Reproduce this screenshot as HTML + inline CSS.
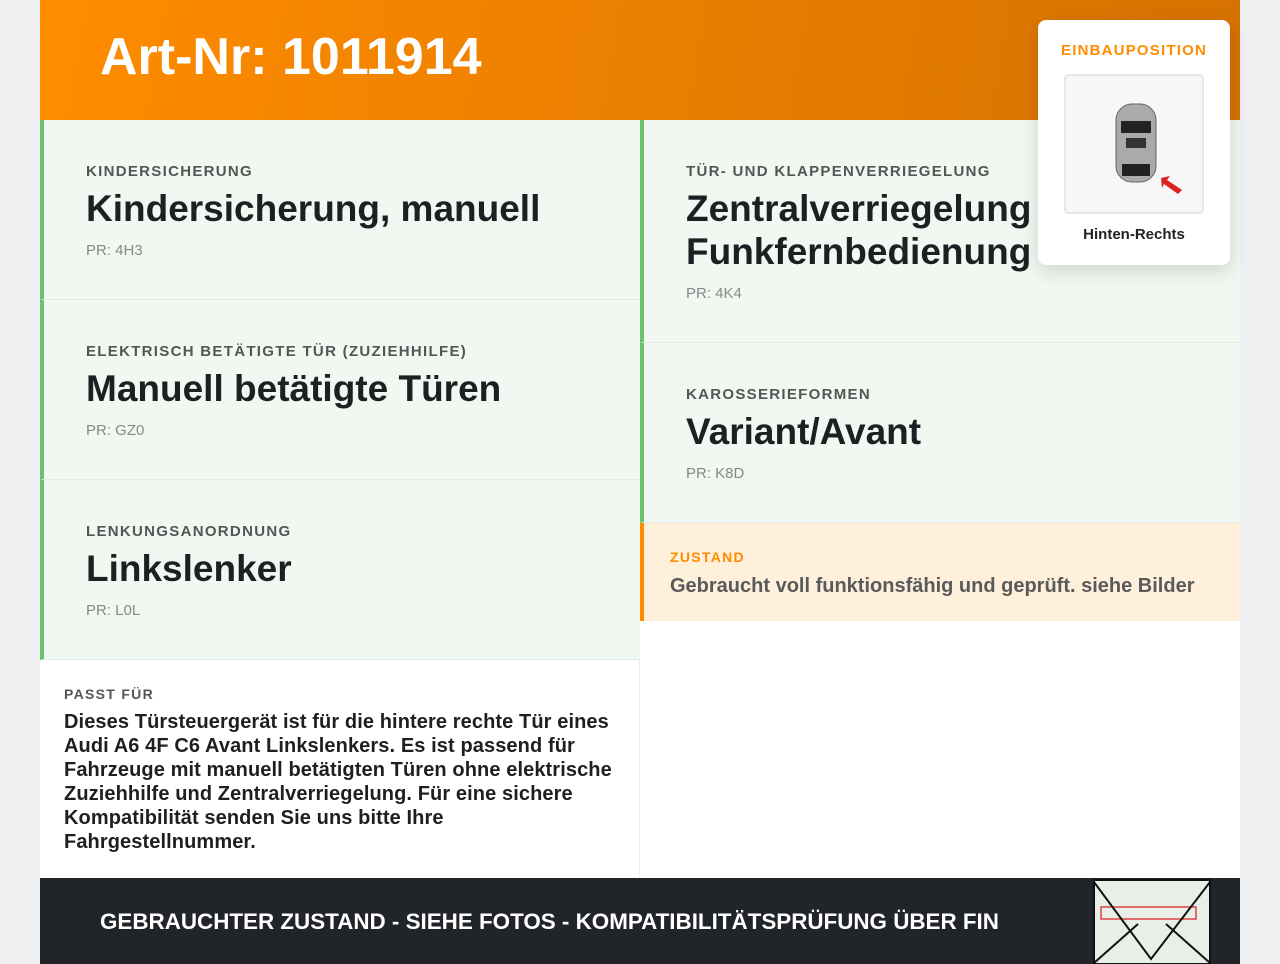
<!DOCTYPE html>
<html><head><meta charset="utf-8"><style>
*{margin:0;padding:0;box-sizing:border-box}
body{width:1280px;height:964px;background:#eef0f2;font-family:"Liberation Sans",sans-serif;overflow:hidden;position:relative}
.wrap{position:absolute;left:40px;top:0;width:1200px;height:964px;background:#fff}
.hdr{position:absolute;left:0;top:0;width:1200px;height:120px;background:linear-gradient(100deg,#ff8c00,#d67200)}
.hdr h1{position:absolute;left:60px;top:27px;color:#fff;font-size:52px;font-weight:bold}
.cell{position:absolute;background:#f1f8f1;border-left:4px solid #6cc070;border-bottom:1px solid #e3ece3;padding-left:42px}
.lab{font-size:15px;letter-spacing:1.3px;color:#555;font-weight:bold;text-transform:uppercase}
.tit{font-size:37px;font-weight:bold;color:#1d1f22;line-height:43px;margin-top:7px}
.pr{font-size:15px;color:#888;margin-top:12px}
.zu{position:absolute;left:600px;top:523px;width:600px;height:98px;background:#fff0dc;border-left:4px solid #ff8c00;padding:26px 0 0 26px}
.card{position:absolute;left:998px;top:20px;width:192px;height:245px;background:#fff;border-radius:8px;box-shadow:0 6px 20px rgba(0,0,0,.15);text-align:center}
.foot{position:absolute;left:0;top:878px;width:1200px;height:86px;background:#212529}
</style></head><body><div class="wrap">
<div class="hdr"><h1>Art-Nr: 1011914</h1></div>
<div class="cell" style="left:0;top:120px;width:600px;height:180px;padding-top:43px"><div class="lab">Kindersicherung</div><div class="tit">Kindersicherung, manuell</div><div class="pr">PR: 4H3</div></div>
<div class="cell" style="left:0;top:300px;width:600px;height:180px;padding-top:43px"><div class="lab">Elektrisch betätigte Tür (Zuziehhilfe)</div><div class="tit">Manuell betätigte Türen</div><div class="pr">PR: GZ0</div></div>
<div class="cell" style="left:0;top:480px;width:600px;height:180px;padding-top:43px"><div class="lab">Lenkungsanordnung</div><div class="tit">Linkslenker</div><div class="pr">PR: L0L</div></div>
<div class="cell" style="left:600px;top:120px;width:600px;height:223px;padding-top:43px"><div class="lab">Tür- und Klappenverriegelung</div><div class="tit">Zentralverriegelung mit<br>Funkfernbedienung</div><div class="pr">PR: 4K4</div></div>
<div class="cell" style="left:600px;top:343px;width:600px;height:180px;padding-top:43px"><div class="lab">Karosserieformen</div><div class="tit">Variant/Avant</div><div class="pr">PR: K8D</div></div>
<div class="zu"><div class="lab" style="color:#ff8c00;font-size:14px">Zustand</div><div style="font-size:20px;margin-top:10px;font-weight:bold;color:#5a5a5a">Gebraucht voll funktionsfähig und geprüft. siehe Bilder</div></div>
<div style="position:absolute;left:0;top:660px;width:600px;height:218px;border-right:1px solid #eee;padding:26px 20px 0 24px">
<div class="lab" style="font-size:14px">Passt für</div>
<div style="font-size:20px;font-weight:bold;color:#1d1f22;line-height:24px;margin-top:8px;letter-spacing:.1px">Dieses Türsteuergerät ist für die hintere rechte Tür eines Audi A6 4F C6 Avant Linkslenkers. Es ist passend für Fahrzeuge mit manuell betätigten Türen ohne elektrische Zuziehhilfe und Zentralverriegelung. Für eine sichere Kompatibilität senden Sie uns bitte Ihre Fahrgestellnummer.</div></div>
<div class="foot"><div style="position:absolute;left:60px;top:31px;color:#fff;font-size:22.4px;font-weight:bold">GEBRAUCHTER ZUSTAND - SIEHE FOTOS - KOMPATIBILITÄTSPRÜFUNG ÜBER FIN</div>
<svg style="position:absolute;left:1053px;top:1px" width="118" height="85" viewBox="0 0 118 85"><rect x="1" y="1" width="116" height="84" fill="#e8efe6" stroke="#111" stroke-width="2"/><rect x="8" y="28" width="95" height="12" fill="none" stroke="#d44" stroke-width="1.5"/><path d="M1 3 L58 80 L117 3 M1 84 L45 45 M117 84 L73 45" stroke="#111" stroke-width="2" fill="none"/></svg></div>
<div class="card"><div style="color:#ff8c00;font-weight:bold;font-size:15px;letter-spacing:1.2px;margin-top:22px">EINBAUPOSITION</div>
<div style="margin:15px auto 0;width:140px;height:140px;background:#f6f7f9;border:2px solid #e5e7ea;border-radius:4px;position:relative">
<svg width="140" height="140" style="position:absolute;left:0;top:0"><rect x="50" y="28" width="40" height="78" rx="16" fill="#aaa" stroke="#666"/><rect x="55" y="45" width="30" height="12" fill="#222"/><rect x="60" y="62" width="20" height="10" fill="#333"/><rect x="56" y="88" width="28" height="12" fill="#222"/><path d="M95 102 L104 100 L101 104 L116 114 L112 118 L98 108 L96 112 Z" fill="#d22"/></svg></div>
<div style="font-size:15px;font-weight:bold;color:#222;margin-top:12px">Hinten-Rechts</div></div>
</div></body></html>
